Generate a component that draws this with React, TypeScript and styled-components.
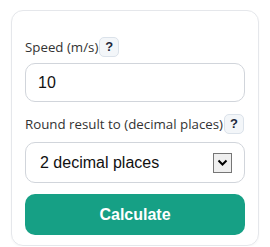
import React from 'react';
import styled, { createGlobalStyle } from 'styled-components';

const Global = createGlobalStyle`
  body {
    margin: 0;
    background: #ffffff;
    font-family: "Open Sans", "Noto Sans", sans-serif;
  }
`;

const Page = styled.div`
  padding: 10px 11px 0 11px;
`;

const Card = styled.div`
  border: 1px solid #e5e7eb;
  border-radius: 12px;
  padding: 26px 13px 10px 13px;
  height: 236px;
  box-sizing: border-box;
  display: flex;
  flex-direction: column;
  box-shadow: 0 1px 2px rgba(0, 0, 0, 0.04);
`;

const Field = styled.div<{ gap?: number }>`
  display: flex;
  flex-direction: column;
  margin-bottom: ${(p) => p.gap ?? 10}px;
`;

const LabelRow = styled.div<{ space?: number }>`
  display: flex;
  align-items: center;
  height: 20px;
  margin-bottom: ${(p) => p.space ?? 6}px;
`;

const Label = styled.label`
  font-size: 13.3px;
  color: #333333;
  white-space: nowrap;
`;

const Help = styled.button`
  flex-shrink: 0;
  width: 20px;
  height: 20px;
  padding: 0;
  margin-left: 1px;
  border: 1px solid #dbe2ea;
  border-radius: 5px;
  background: #f3f6f9;
  color: #1e293b;
  font-family: "Liberation Sans", Arial, sans-serif;
  font-weight: bold;
  font-size: 13px;
  line-height: 18px;
  text-align: center;
`;

const Input = styled.input`
  height: 39px;
  box-sizing: border-box;
  border: 1px solid #d1d5db;
  border-radius: 10px;
  padding: 0 12px;
  font-family: "Liberation Sans", Arial, sans-serif;
  font-size: 16px;
  color: #111111;
  outline: none;
`;

const SelectBox = styled.div`
  height: 41px;
  box-sizing: border-box;
  border: 1px solid #d1d5db;
  border-radius: 10px;
  padding: 0 12px 0 14px;
  display: flex;
  align-items: center;
  justify-content: space-between;
  font-family: "Liberation Sans", Arial, sans-serif;
  font-size: 16px;
  color: #111111;
`;

const Arrow = styled.span`
  width: 19px;
  height: 20px;
  box-sizing: border-box;
  border: 1px solid #767676;
  background: #efefef;
  display: flex;
  align-items: center;
  justify-content: center;
`;

const Button = styled.button`
  height: 42px;
  border: 0;
  border-radius: 10px;
  background: #16a085;
  color: #ffffff;
  font-family: "Liberation Sans", Arial, sans-serif;
  font-weight: bold;
  font-size: 16px;
`;

export default function App() {
  return (
    <Page>
      <Global />
      <Card>
        <Field gap={12}>
          <LabelRow space={6}>
            <Label>Speed (m/s)</Label>
            <Help>?</Help>
          </LabelRow>
          <Input defaultValue="10" />
        </Field>
        <Field gap={11}>
          <LabelRow space={8}>
            <Label>Round result to (decimal places)</Label>
            <Help>?</Help>
          </LabelRow>
          <SelectBox>
            <span>2 decimal places</span>
            <Arrow>
              <svg width="11" height="8" viewBox="0 0 11 8">
                <path d="M1.5 1.5 L5.5 5.5 L9.5 1.5" fill="none" stroke="#000" strokeWidth="2" />
              </svg>
            </Arrow>
          </SelectBox>
        </Field>
        <Button>Calculate</Button>
      </Card>
    </Page>
  );
}
